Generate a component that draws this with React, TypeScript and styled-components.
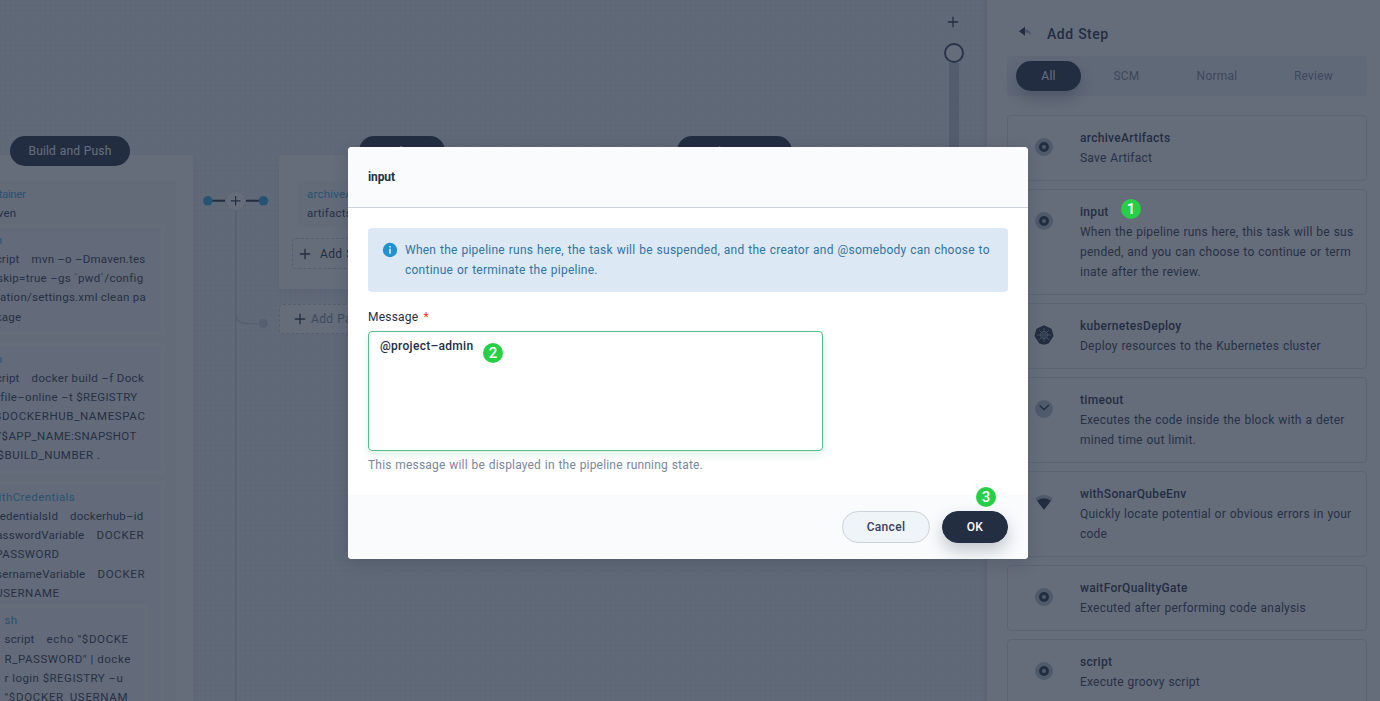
import React from "react";
import styled, { createGlobalStyle } from "styled-components";

const Global = createGlobalStyle`
  * { box-sizing: border-box; }
  body { margin: 0; overflow: hidden; }
`;

const Page = styled.div`
  position: relative;
  display: flex;
  width: 1380px;
  height: 701px;
  overflow: hidden;
  font: 400 12px/20px Roboto, "Liberation Sans", sans-serif;
  letter-spacing: 0.22px;
  word-spacing: 0.6px;
  color: #242e42;
  background: #fff;
`;

/* ---------- pipeline canvas ---------- */

const Canvas = styled.div`
  position: relative;
  display: flex;
  align-items: flex-start;
  flex: 0 0 987px;
  height: 701px;
  padding-top: 155px;
  overflow: hidden;
  background-color: #eff4f9;
  background-image:
    linear-gradient(rgba(180, 195, 215, 0.08) 1px, transparent 1px),
    linear-gradient(90deg, rgba(180, 195, 215, 0.08) 1px, transparent 1px);
  background-size: 5px 5px;
`;

const StageColumn = styled.div<{ $w: number; $shift?: number }>`
  flex: 0 0 ${(p) => p.$w}px;
  margin-left: ${(p) => p.$shift ?? 0}px;
`;

const Stage = styled.div<{ $h: number }>`
  position: relative;
  height: ${(p) => p.$h}px;
  padding: 26px 17px 0 13px;
  background: #fff;
  border-radius: 4px;
  box-shadow: 0 4px 8px rgba(36, 46, 66, 0.06);
`;

const StageName = styled.div<{ $x: number; $w: number; $lh?: number }>`
  position: absolute;
  top: -19px;
  left: ${(p) => p.$x}px;
  width: ${(p) => p.$w}px;
  height: 30px;
  border-radius: 15px;
  background: #242e42;
  color: #fff;
  line-height: ${(p) => p.$lh ?? 30}px;
  text-align: center;
  letter-spacing: 0.15px;
`;

const Task = styled.div<{ $h?: number }>`
  height: ${(p) => (p.$h ? `${p.$h}px` : "auto")};
  padding: 4px 11px 0 10px;
  margin-left: 5px;
  background: #f9fafb;
  color: #2b364c;
  font-size: 11.5px;
  line-height: 19.25px;
  word-spacing: 0;
  border-radius: 2px;
`;

const SubTask = styled.div<{ $h: number; $gap?: number; $pad?: number; $right?: number }>`
  height: ${(p) => p.$h}px;
  margin: ${(p) => p.$gap ?? 0}px ${(p) => p.$right ?? 0}px 0 0;
  padding: 3px 0 0 ${(p) => p.$pad ?? 11}px;
  border: 4px solid #fefefe;
  border-radius: 4px;
  background: #f7f9fa;
`;

const Line = styled.div<{ $ls?: number }>`
  white-space: pre;
  letter-spacing: ${(p) => (p.$ls === undefined ? "inherit" : `${p.$ls}px`)};
`;

const TaskName = styled(Line)`
  color: #34a9e2;
`;

const Key = styled.span`
  margin-right: 12px;
  letter-spacing: 0.2px;
`;

const DashedButton = styled.div<{ $h: number; $muted?: boolean }>`
  display: flex;
  align-items: center;
  height: ${(p) => p.$h}px;
  gap: ${(p) => (p.$muted ? 5 : 9)}px;
  padding-left: ${(p) => (p.$muted ? 14 : 6)}px;
  margin-top: ${(p) => (p.$muted ? 15 : 11)}px;
  border: 1px dashed #ccd3db;
  border-radius: 4px;
  background: #fff;
  color: ${(p) => (p.$muted ? "#79879c" : "#242e42")};
  letter-spacing: 0.3px;
`;

const Joint = styled.div`
  flex: 0 0 86px;
  height: 546px;
`;

function Plus({ size = 12 }: { size?: number }) {
  return (
    <svg width={size} height={size} viewBox="0 0 12 12" stroke="#242e42" strokeWidth="1.3">
      <path d="M6 .8v10.4M.8 6h10.4" />
    </svg>
  );
}

function Connector() {
  return (
    <Joint>
      <svg width="86" height="546" viewBox="193 155 86 546" fill="none">
        <path d="M235.7 211V701M235.7 312q0 11.5 11 11.5H258" stroke="#ccd3db" strokeWidth="1.4" />
        <circle cx="263.3" cy="323.6" r="4.6" fill="#ccd3db" />
        <path d="M212 200.8H225M246 200.8H259" stroke="#242e42" strokeWidth="2" />
        <circle cx="207.8" cy="200.8" r="4.8" fill="#34a9e2" />
        <circle cx="263.4" cy="200.8" r="4.8" fill="#34a9e2" />
        <circle cx="235.6" cy="200.8" r="9.6" fill="#fff" stroke="#d8dfe7" strokeDasharray="2 2" />
        <path d="M235.6 196v9.6M230.8 200.8h9.6" stroke="#242e42" strokeWidth="1.2" />
      </svg>
    </Joint>
  );
}

const ZoomControl = styled.div`
  position: absolute;
  top: 16px;
  left: 944px;
  width: 20px;
  display: flex;
  flex-direction: column;
  align-items: center;
  svg { margin-left: -2px; }
`;

const ZoomKnob = styled.div`
  width: 20px;
  height: 20px;
  margin-top: 15px;
  border: 2px solid #36435c;
  border-radius: 50%;
  background: #fff;
`;

const ZoomTrack = styled.div`
  width: 10px;
  height: 140px;
  background: #c1c9d3;
`;

/* ---------- add step panel ---------- */

const Panel = styled.aside`
  position: relative;
  flex: 1;
  height: 701px;
  padding: 24px 13px 0 20px;
  background: #fff;
  box-shadow: 0 0 5px rgba(36, 46, 66, 0.2);
`;

const PanelTitle = styled.div`
  display: flex;
  align-items: center;
  gap: 15px;
  height: 20px;
  padding-left: 11px;
  font-size: 14px;
  font-weight: 500;
  letter-spacing: 0.5px;
  svg { position: relative; top: -2px; }
`;

const Tabs = styled.div`
  display: flex;
  align-items: center;
  height: 40px;
  margin-top: 12px;
  padding-left: 9px;
  border-radius: 4px;
  background: #eff4f9;
`;

const Tab = styled.div<{ $w: number; $active?: boolean }>`
  width: ${(p) => p.$w}px;
  height: 30px;
  border-radius: 15px;
  line-height: ${(p) => (p.$active ? 31 : 30)}px;
  text-align: center;
  color: ${(p) => (p.$active ? "#fff" : "#79879c")};
  background: ${(p) => (p.$active ? "#242e42" : "transparent")};
  box-shadow: ${(p) => (p.$active ? "0 8px 16px rgba(36, 46, 66, 0.3)" : "none")};
`;

const Steps = styled.div`
  display: flex;
  flex-direction: column;
  gap: 8px;
  margin-top: 19px;
`;

const StepCard = styled.div`
  display: flex;
  padding: 12px 0;
  border: 1px solid #dfe5ec;
  border-radius: 4px;
`;

const StepIcon = styled.div`
  display: flex;
  align-items: center;
  justify-content: center;
  width: 72px;
  height: 38px;
`;

const StepTitle = styled.div`
  font-weight: 500;
  letter-spacing: 0.3px;
`;

const StepLine = styled.div`
  white-space: pre;
  color: #2e394f;
`;

type IconName = "ring" | "kube" | "clock" | "sonar";

function Icon({ name }: { name: IconName }) {
  return (
    <svg width="20" height="20" viewBox="0 0 20 20" fill="none">
      {name === "ring" && (
        <>
          <circle cx="10" cy="10" r="9" fill="#b6c2cd" />
          <circle cx="10" cy="10" r="3.5" stroke="#242e42" strokeWidth="3" />
        </>
      )}
      {name === "kube" && (
        <>
          <path d="M10 .3l7.500 3.500 2.100 7.200-5 7.600-4.600 1.200-4.600-1.200-5-7.600 2.100-7.200z" fill="#242e42" />
          <g stroke="#a9b5c2" strokeWidth=".8">
            <circle cx="10" cy="10" r="3.600" />
            <circle cx="10" cy="10" r="1.300" />
            <path d="M10 3v5M10 12v5M3 10h5M12 10h5M5 5l3.700 3.700M11.300 11.300L15 15M15 5l-3.700 3.700M8.700 11.300L5 15" />
          </g>
        </>
      )}
      {name === "clock" && (
        <>
          <circle cx="10" cy="10" r="9" fill="#b6c2cd" />
          <path d="M5.600 6.400L10 10.600l5-4.600" stroke="#242e42" strokeWidth="1.4" />
        </>
      )}
      {name === "sonar" && (
        <>
          <path d="M1 5.200Q10-1 19 5.200L17 7.700Q10 3 3 7.700z" fill="#b6c2cd" />
          <path d="M3 7.700Q10 3 17 7.700L10 17z" fill="#242e42" />
        </>
      )}
    </svg>
  );
}

const steps: { icon: IconName; title: string; lines: string[] }[] = [
  { icon: "ring", title: "archiveArtifacts", lines: ["Save Artifact"] },
  {
    icon: "ring",
    title: "input",
    lines: [
      "When the pipeline runs here, this task will be sus",
      "pended, and you can choose to continue or term",
      "inate after the review.",
    ],
  },
  { icon: "kube", title: "kubernetesDeploy", lines: ["Deploy resources to the Kubernetes cluster"] },
  {
    icon: "clock",
    title: "timeout",
    lines: ["Executes the code inside the block with a deter", "mined time out limit."],
  },
  {
    icon: "sonar",
    title: "withSonarQubeEnv",
    lines: ["Quickly locate potential or obvious errors in your", "code"],
  },
  { icon: "ring", title: "waitForQualityGate", lines: ["Executed after performing code analysis"] },
  { icon: "ring", title: "script", lines: ["Execute groovy script"] },
];

/* ---------- dialog ---------- */

const Overlay = styled.div`
  position: absolute;
  inset: 0;
  display: flex;
  justify-content: center;
  align-items: flex-start;
  padding: 147px 4px 0 0;
  background: rgba(36, 46, 66, 0.7);
`;

const Dialog = styled.div`
  width: 680px;
  height: 412px;
  overflow: hidden;
  border-radius: 4px;
  background: #fff;
  box-shadow: 0 4px 16px rgba(36, 46, 66, 0.2);
`;

const DialogHeader = styled.div`
  height: 61px;
  padding: 20px;
  border-bottom: 1px solid #ccd3db;
  background: #f9fbfd;
  font-weight: 700;
  letter-spacing: -0.1px;
`;

const DialogBody = styled.div`
  height: 287px;
  padding: 20px;
`;

const Notice = styled.div`
  display: flex;
  gap: 7px;
  height: 64px;
  padding: 12px 14px;
  border-radius: 4px;
  background: #dce9f5;
  color: #32749d;
  letter-spacing: 0.24px;
  svg { flex: none; margin-top: 2px; }
`;

const Label = styled.div`
  display: flex;
  gap: 5px;
  margin-top: 15px;
`;

const Star = styled.span`
  color: #e0342c;
`;

const TextArea = styled.div`
  width: 455px;
  height: 120px;
  margin-top: 4px;
  padding: 4px 11px;
  border: 1px solid #55bc8a;
  border-radius: 4px;
  box-shadow: 0 4px 8px rgba(85, 188, 138, 0.2);
  font-weight: 500;
  letter-spacing: 0.3px;
`;

const Help = styled.div`
  margin-top: 4px;
  color: #79879c;
  letter-spacing: 0.18px;
`;

const DialogFooter = styled.div`
  display: flex;
  justify-content: flex-end;
  gap: 12px;
  height: 64px;
  padding: 16px 20px;
  background: #f9fbfd;
`;

const Button = styled.button<{ $w: number; $primary?: boolean }>`
  width: ${(p) => p.$w}px;
  height: 32px;
  padding: 0;
  border: 1px solid ${(p) => (p.$primary ? "#242e42" : "#ccd3db")};
  border-radius: 16px;
  background: ${(p) => (p.$primary ? "#242e42" : "#eff4f9")};
  color: ${(p) => (p.$primary ? "#fff" : "#36435c")};
  font: 500 12px/20px Roboto, sans-serif;
  letter-spacing: 0.3px;
  box-shadow: ${(p) => (p.$primary ? "0 8px 16px rgba(36, 46, 66, 0.25)" : "none")};
`;

const Badge = styled.div<{ $x: number; $y: number }>`
  position: absolute;
  left: ${(p) => p.$x}px;
  top: ${(p) => p.$y}px;
  width: 20px;
  height: 20px;
  border-radius: 50%;
  background: #27cf46;
  color: #fff;
  font: 500 15px/20px Roboto, sans-serif;
  letter-spacing: 0;
  text-align: center;
`;

export default function App() {
  return (
    <Page>
      <Global />
      <Canvas>
        <StageColumn $w={240} $shift={-47}>
          <Stage $h={600}>
            <StageName $x={57} $w={120}>Build and Push</StageName>
            <Task $h={600}>
              <TaskName $ls={-0.4}>container</TaskName>
              <Line>maven</Line>
              <SubTask $h={111} $pad={4.5}>
                <TaskName>sh</TaskName>
                <Line><Key>script</Key>mvn –o –Dmaven.tes</Line>
                <Line $ls={0.3}>t.skip=true –gs `pwd`/config</Line>
                <Line $ls={0.25}>uration/settings.xml clean pa</Line>
                <Line>ckage</Line>
              </SubTask>
              <SubTask $h={131} $gap={8} $pad={4.5}>
                <TaskName>sh</TaskName>
                <Line $ls={0.34}><Key>script</Key>docker build –f Dock</Line>
                <Line $ls={0.32}>erfile–online –t $REGISTRY</Line>
                <Line $ls={0.62}>/$DOCKERHUB_NAMESPAC</Line>
                <Line $ls={0.38}>E/$APP_NAME:SNAPSHOT</Line>
                <Line $ls={0.5}>–$BUILD_NUMBER .</Line>
              </SubTask>
              <SubTask $h={260} $gap={7} $pad={4.5}>
                <TaskName $ls={0.42}>withCredentials</TaskName>
                <Line><Key>credentialsId</Key>dockerhub–id</Line>
                <Line $ls={0.7}><Key>passwordVariable</Key>DOCKER</Line>
                <Line $ls={0.5}>_PASSWORD</Line>
                <Line $ls={0.7}><Key>usernameVariable</Key>DOCKER</Line>
                <Line $ls={0.5}>_USERNAME</Line>
                <SubTask $h={140} $gap={1} $right={12}>
                  <TaskName>sh</TaskName>
                  <Line $ls={0.62}><Key>script</Key>echo "$DOCKE</Line>
                  <Line $ls={0.56}>R_PASSWORD" | docke</Line>
                  <Line $ls={0.45}>r login $REGISTRY –u</Line>
                  <Line $ls={0.68}>"$DOCKER_USERNAM</Line>
                </SubTask>
              </SubTask>
            </Task>
          </Stage>
        </StageColumn>
        <Connector />
        <StageColumn $w={246}>
          <Stage $h={134}>
            <StageName $x={80} $w={86} $lh={32}>Artifacts</StageName>
            <Task $h={46}>
              <TaskName>archiveArtifacts</TaskName>
              <Line>artifacts</Line>
            </Task>
            <DashedButton $h={31}><Plus />Add Step</DashedButton>
          </Stage>
          <DashedButton $h={30} $muted><Plus />Add Parallel</DashedButton>
        </StageColumn>
        <StageColumn $w={246} $shift={86}>
          <Stage $h={134}>
            <StageName $x={66} $w={115} $lh={32}>Deploy to Dev</StageName>
          </Stage>
        </StageColumn>
        <ZoomControl>
          <Plus />
          <ZoomKnob />
          <ZoomTrack />
        </ZoomControl>
      </Canvas>
      <Panel>
        <PanelTitle>
          <svg width="14" height="12" viewBox="0 0 14 12">
            <path d="M6 3.200c4.200 0 6.800 2 7.200 6-1.700-2.200-4-2.800-7.200-2.600z" fill="#a5b1be" />
            <path d="M7 .8v9L1 5.300z" fill="#242e42" />
          </svg>
          Add Step
        </PanelTitle>
        <Tabs>
          <Tab $w={65} $active>All</Tab>
          <Tab $w={91}>SCM</Tab>
          <Tab $w={90}>Normal</Tab>
          <Tab $w={103}>Review</Tab>
        </Tabs>
        <Steps>
          {steps.map((s) => (
            <StepCard key={s.title}>
              <StepIcon><Icon name={s.icon} /></StepIcon>
              <div>
                <StepTitle>{s.title}</StepTitle>
                {s.lines.map((l) => <StepLine key={l}>{l}</StepLine>)}
              </div>
            </StepCard>
          ))}
        </Steps>
      </Panel>
      <Overlay>
        <Dialog>
          <DialogHeader>input</DialogHeader>
          <DialogBody>
            <Notice>
              <svg width="16" height="16" viewBox="0 0 16 16">
                <circle cx="8" cy="8" r="7.200" fill="#2193cc" />
                <path d="M7.200 6.800h1.600v5H7.200zM7.200 4h1.600v1.600H7.200z" fill="#dce9f5" />
              </svg>
              <div>
                <Line>When the pipeline runs here, the task will be suspended, and the creator and @somebody can choose to</Line>
                <Line>continue or terminate the pipeline.</Line>
              </div>
            </Notice>
            <Label>Message <Star>*</Star></Label>
            <TextArea>@project–admin</TextArea>
            <Help>This message will be displayed in the pipeline running state.</Help>
          </DialogBody>
          <DialogFooter>
            <Button $w={88}>Cancel</Button>
            <Button $w={66} $primary>OK</Button>
          </DialogFooter>
        </Dialog>
      </Overlay>
      <Badge $x={1121} $y={199}>1</Badge>
      <Badge $x={483} $y={343}>2</Badge>
      <Badge $x={976} $y={487}>3</Badge>
    </Page>
  );
}
